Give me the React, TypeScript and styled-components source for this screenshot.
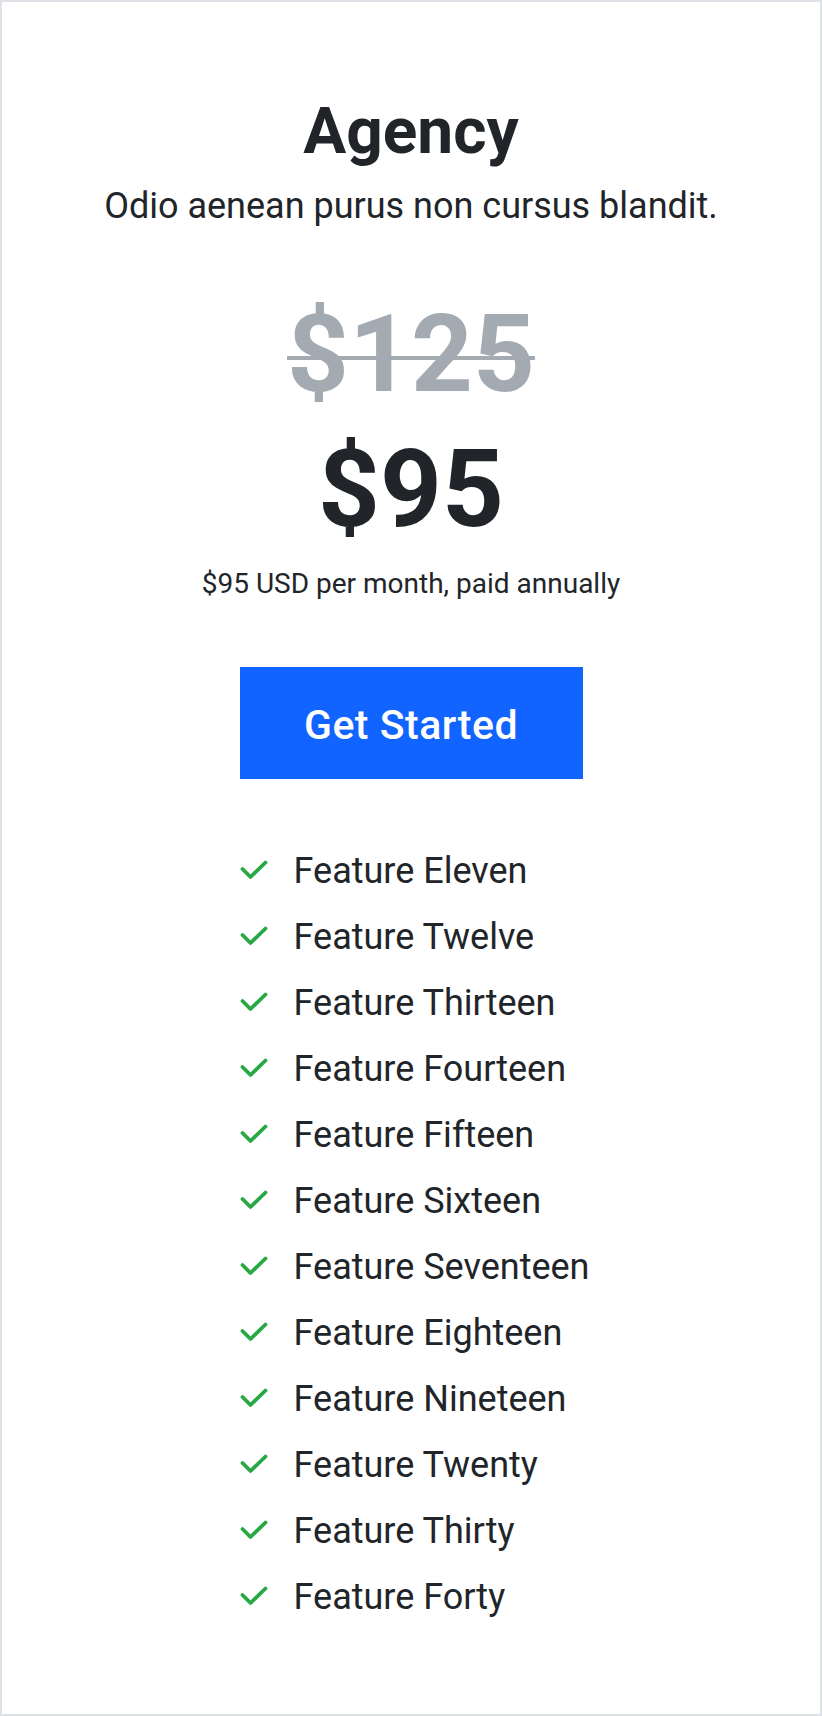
import React from "react";
import styled, { createGlobalStyle } from "styled-components";

const GlobalStyle = createGlobalStyle`
  html, body {
    margin: 0;
    padding: 0;
    background: #ffffff;
  }
  body {
    font-family: Roboto, "Liberation Sans", Arial, sans-serif;
    color: #212529;
  }
  * { box-sizing: border-box; }
`;

const Card = styled.div`
  min-height: 1716px;
  width: 822px;
  border: 2px solid #dee2e6;
  background: #ffffff;
  display: flex;
  flex-direction: column;
  align-items: center;
  padding: 94px 0 80px;
  text-align: center;
`;

const Title = styled.h1`
  margin: 0;
  font-size: 64px;
  line-height: 72px;
  font-weight: 700;
  color: #212529;
`;

const Subtitle = styled.p`
  margin: 17px 0 0;
  font-size: 36px;
  line-height: 43px;
  font-weight: 400;
  color: #212529;
`;

const Price = styled.div<{ $old?: boolean }>`
  margin-top: ${(p) => (p.$old ? "64px" : "10px")};
  font-size: 108px;
  line-height: 125px;
  font-weight: 700;
  color: ${(p) => (p.$old ? "#a3aab1" : "#212529")};
  text-decoration: ${(p) => (p.$old ? "line-through" : "none")};
  text-decoration-thickness: 4px;
`;

const Billing = styled.p`
  margin: 16px 0 0;
  font-size: 28px;
  line-height: 31px;
  color: #212529;
`;

const CTA = styled.button`
  margin-top: 68px;
  border: none;
  border-radius: 0;
  background: #1164ff;
  color: #ffffff;
  font-family: Roboto, "Liberation Sans", Arial, sans-serif;
  font-size: 41px;
  line-height: 48px;
  font-weight: 500;
  letter-spacing: 0.5px;
  width: 343px;
  padding: 34px 0 30px;
  cursor: pointer;
`;

const FeatureList = styled.ul`
  list-style: none;
  margin: 59px 0 0;
  padding: 0 0 0 7px;
  display: flex;
  flex-direction: column;
  align-items: flex-start;
  text-align: left;
`;

const FeatureItem = styled.li`
  display: flex;
  align-items: center;
  height: 66px;
  font-size: 36px;
  line-height: 66px;
  color: #212529;
`;

const CheckIcon = styled.svg`
  width: 28px;
  height: 22px;
  margin-right: 26px;
  flex: none;
  overflow: visible;
`;

const Check = () => (
  <CheckIcon viewBox="0 0 28 22" aria-hidden="true">
    <path
      d="M2.5 9 L10.5 17 L25.5 2.5"
      fill="none"
      stroke="#28a745"
      strokeWidth={3.8}
      strokeLinecap="round"
      strokeLinejoin="round"
    />
  </CheckIcon>
);

const features = [
  "Feature Eleven",
  "Feature Twelve",
  "Feature Thirteen",
  "Feature Fourteen",
  "Feature Fifteen",
  "Feature Sixteen",
  "Feature Seventeen",
  "Feature Eighteen",
  "Feature Nineteen",
  "Feature Twenty",
  "Feature Thirty",
  "Feature Forty",
];

export default function App() {
  return (
    <>
      <GlobalStyle />
      <Card>
        <Title>Agency</Title>
        <Subtitle>Odio aenean purus non cursus blandit.</Subtitle>
        <Price $old>$125</Price>
        <Price>$95</Price>
        <Billing>$95 USD per month, paid annually</Billing>
        <CTA>Get Started</CTA>
        <FeatureList>
          {features.map((f) => (
            <FeatureItem key={f}>
              <Check />
              {f}
            </FeatureItem>
          ))}
        </FeatureList>
      </Card>
    </>
  );
}
